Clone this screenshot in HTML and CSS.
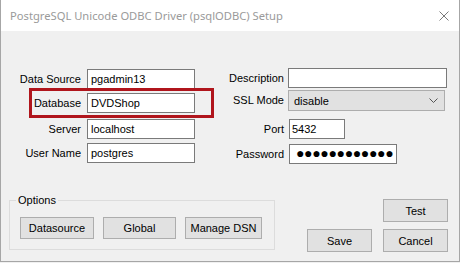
FILE: index.html
```html
<!DOCTYPE html>
<html lang="en">
<head>
  <meta charset="UTF-8">
  <meta name="viewport" content="width=device-width, initial-scale=1.0">
  <title>psqlODBC Setup</title>
  <link rel="stylesheet" href="styles.css">
</head>
<body>
  <div class="window">
    <div class="titlebar">
      <span class="title">PostgreSQL Unicode ODBC Driver (psqlODBC) Setup</span>
      <svg class="close" width="10" height="10" viewBox="0 0 10 10">
        <path d="M0.5 0.5 L9.5 9.5 M9.5 0.5 L0.5 9.5" stroke="#7a7a7a" stroke-width="1" fill="none"/>
      </svg>
    </div>

    <div class="fields">
      <div class="form form-left">
        <label>Data Source</label>
        <div class="field">pgadmin13</div>
        <label>Database</label>
        <div class="field">DVDShop</div>
        <label>Server</label>
        <div class="field">localhost</div>
        <label>User Name</label>
        <div class="field">postgres</div>
      </div>

      <div class="form form-right">
        <label>Description</label>
        <div class="field field-wide"></div>
        <label>SSL Mode</label>
        <div class="combo">
          <span>disable</span>
          <svg width="9" height="5" viewBox="0 0 9 5">
            <path d="M0.5 0.5 L4.5 4.5 L8.5 0.5" stroke="#555" stroke-width="1" fill="none"/>
          </svg>
        </div>
        <label>Port</label>
        <div class="field field-port">5432</div>
        <label>Password</label>
        <div class="field field-pass">●●●●●●●●●●●●</div>
      </div>
    </div>

    <div class="bottom">
      <fieldset class="options">
        <legend>Options</legend>
        <button class="btn btn-ds">Datasource</button>
        <button class="btn btn-global">Global</button>
        <button class="btn btn-dsn">Manage DSN</button>
      </fieldset>
      <div class="actions">
        <button class="btn btn-test">Test</button>
        <button class="btn">Save</button>
        <button class="btn">Cancel</button>
      </div>
    </div>

    <!-- annotation box drawn over the Database row -->
    <div class="highlight"></div>
  </div>
</body>
</html>
```

FILE: styles.css
```css
* {
  box-sizing: border-box;
}
body {
  margin: 0;
  background-color: #f0f0f0;
  font-family: "Liberation Sans", Arial, sans-serif;
  font-size: 11px;
  color: #000;
}
.window {
  position: relative;
  width: 460px;
  height: 262px;
  background-color: #f0f0f0;
  border-left: 1px solid #a6a6a6;
  border-right: 1px solid #a6a6a6;
  border-bottom: 1px solid #a6a6a6;
}
.titlebar {
  height: 31px;
  background-color: #fff;
  display: flex;
  align-items: center;
  justify-content: space-between;
  padding: 0 10px 0 9px;
}
.title {
  font-family: "Noto Sans", sans-serif;
  font-size: 11.2px;
  color: #9a9a9a;
}
.close {
  display: block;
}

.fields {
  display: flex;
  align-items: flex-start;
  padding-top: 37px;
}
.form {
  display: grid;
  align-items: start;
}
.form label {
  line-height: 20px;
  text-align: right;
  white-space: nowrap;
}
.form-left {
  margin-top: 1px;
  grid-template-columns: 80px 108px;
  grid-template-rows: 24px 26px 24px 20px;
  column-gap: 6px;
}
.form-right {
  grid-template-columns: 89px 159px;
  grid-template-rows: 22px 29px 25px 20px;
  column-gap: 4px;
}
.field {
  height: 20px;
  background-color: #fff;
  border: 1px solid #7a7a7a;
  padding-left: 3px;
  line-height: 18px;
  white-space: nowrap;
  overflow: hidden;
}
.field-port {
  width: 56px;
  margin-left: 1px;
  padding-left: 2px;
}
.field-pass {
  width: 108px;
  margin-left: 1px;
  padding-left: 6px;
  font-size: 14px;
  letter-spacing: -0.35px;
  line-height: 17px;
}
.combo {
  width: 157px;
  height: 21px;
  background-color: #e1e1e1;
  border: 1px solid #adadad;
  display: flex;
  align-items: center;
  justify-content: space-between;
  padding: 0 6px 0 5px;
}
.combo svg {
  display: block;
}

.bottom {
  display: flex;
  align-items: flex-start;
  margin-top: 30px;
}
.options {
  width: 266px;
  margin: 0 0 0 8px;
  padding: 10px 12px 10px 10px;
  border: 1px solid #dcdcdc;
  display: flex;
  gap: 9px;
}
.options legend {
  margin-left: -4px;
  padding: 0 2px;
  line-height: 13px;
}
.btn {
  height: 22px;
  padding: 0;
  background-color: #e1e1e1;
  border: 1px solid #adadad;
  font-family: "Liberation Sans", Arial, sans-serif;
  font-size: 11px;
  color: #000;
}
.btn-ds {
  width: 74px;
}
.btn-global {
  width: 73px;
}
.btn-dsn {
  width: 77px;
}
.actions {
  margin: 5px 11px 0 auto;
  display: grid;
  grid-template-columns: 65px 65px;
  grid-auto-rows: 23px;
  column-gap: 11px;
  row-gap: 7px;
}
.actions .btn {
  height: 23px;
}
.btn-test {
  grid-column: 2;
}

.highlight {
  position: absolute;
  left: 28px;
  top: 88px;
  width: 185px;
  height: 30px;
  border: 3px solid #b0151c;
}
```
